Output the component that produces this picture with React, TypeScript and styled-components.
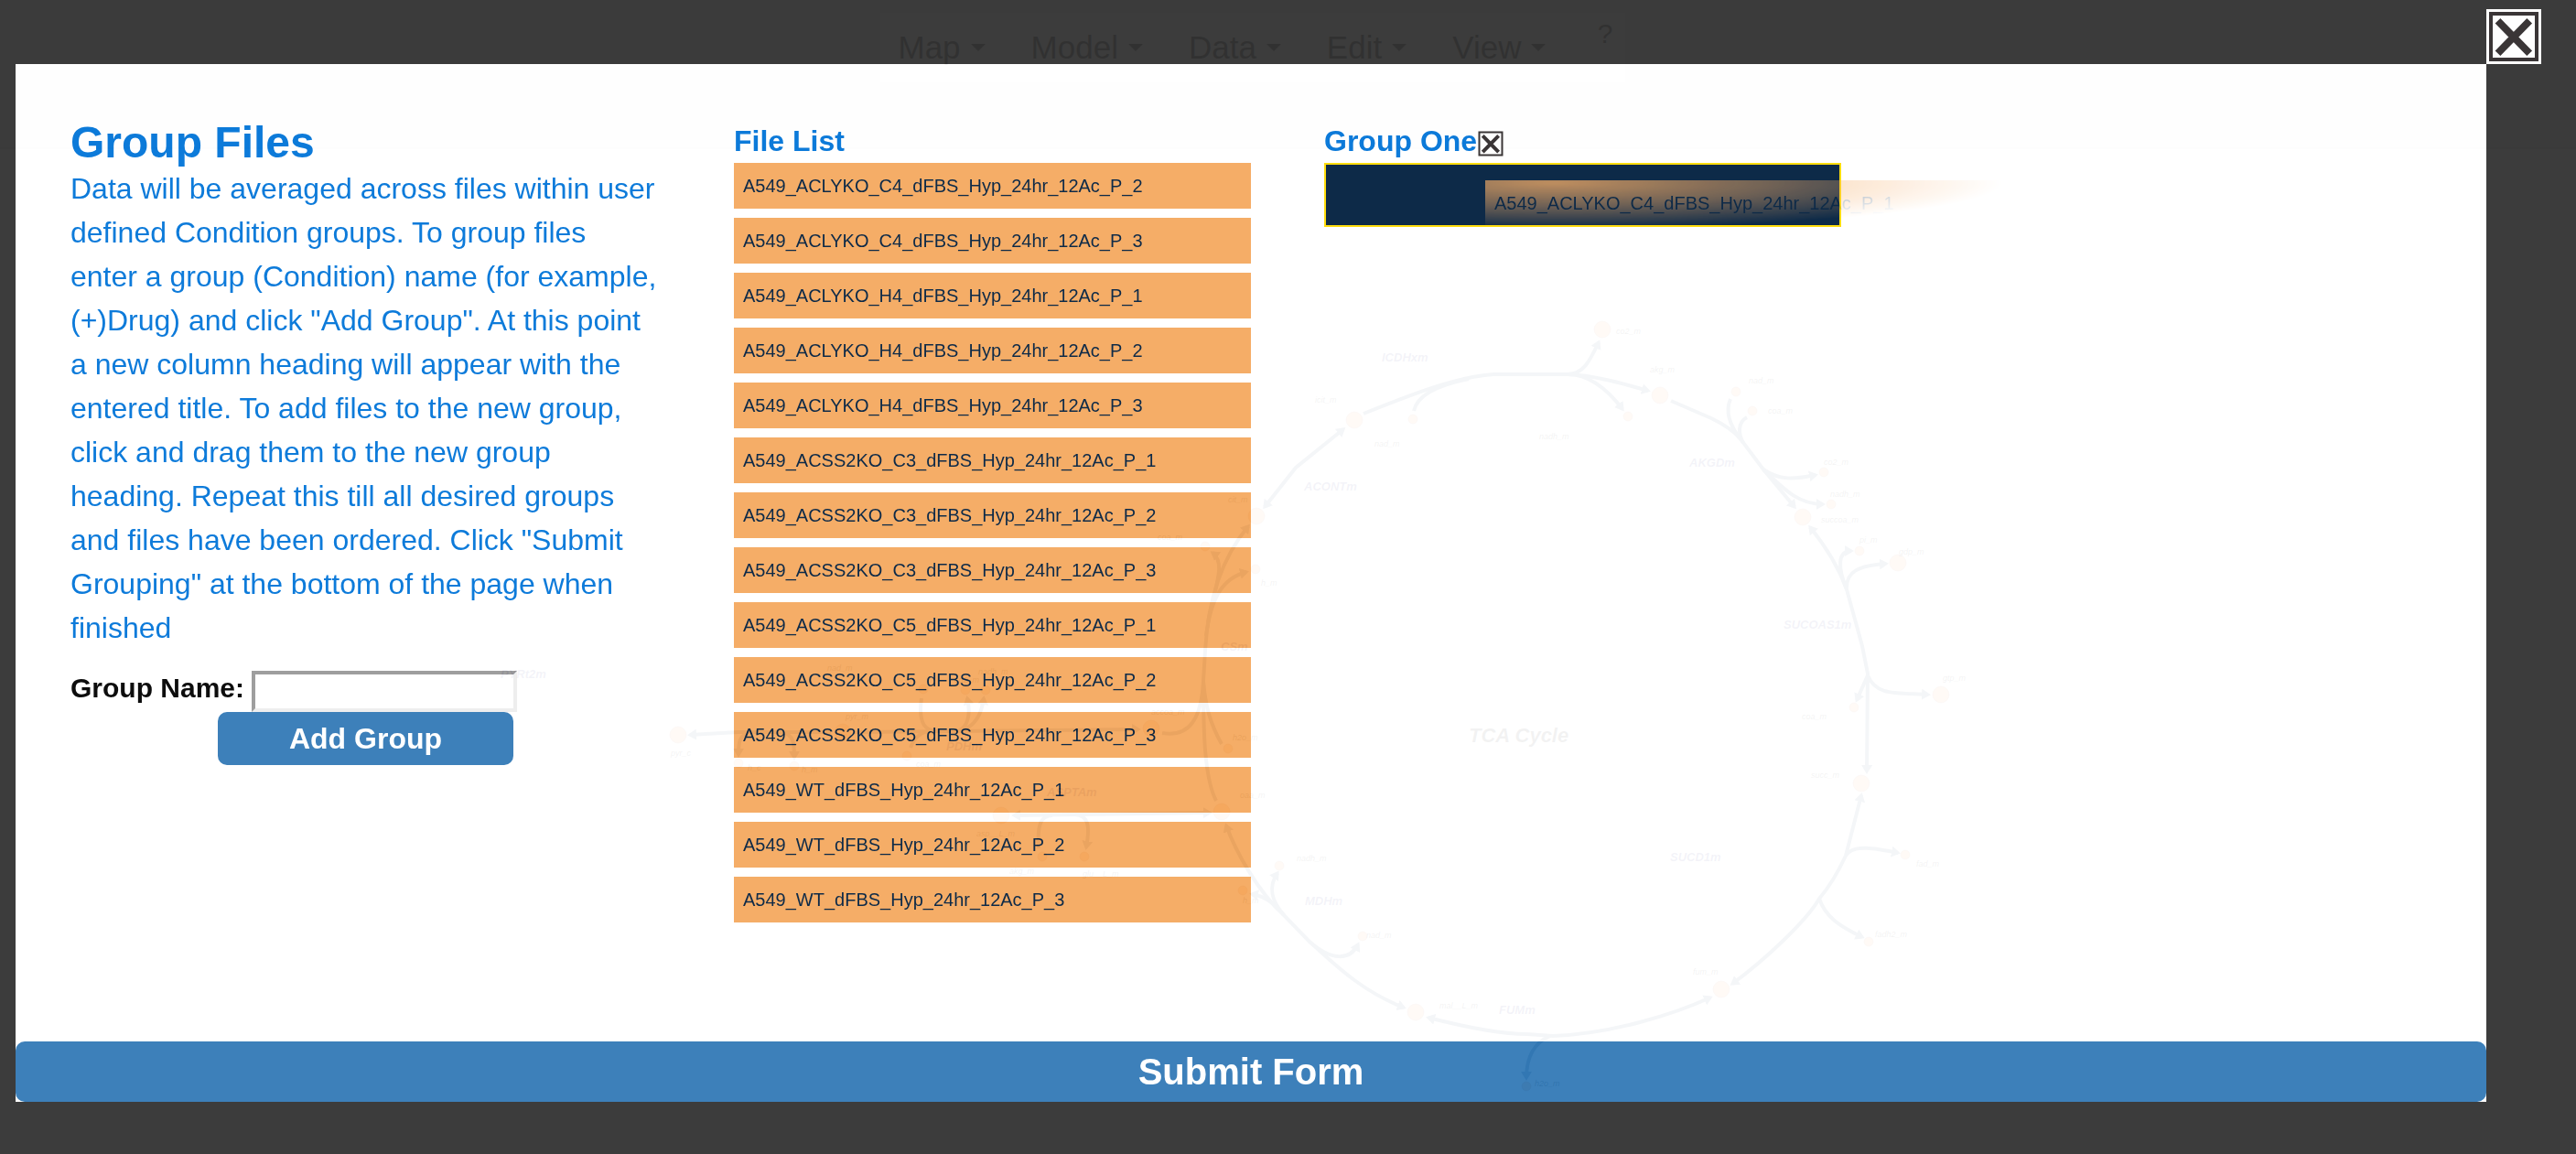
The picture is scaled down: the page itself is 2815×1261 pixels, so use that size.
import React, { useState } from "react";
import styled, { createGlobalStyle } from "styled-components";

const colors = {
  blue: "#0074d9",
  navy: "#001f3f",
  yellow: "#ffdc00",
  orange: "#f5a95f",
  button: "#337ab7",
  backdrop: "#323232",
  icon: "#312c2d",
  edge: "#334e75",
  node: "#f0935a",
  nodeStroke: "#a24510",
  reaction: "#202078",
};

const GlobalStyle = createGlobalStyle`
  *, *::before, *::after { box-sizing: border-box; }
  body {
    margin: 0;
    background: #fff;
    font-family: "Liberation Sans", Arial, sans-serif;
    font-size: 32px;
    line-height: 48px;
    overflow: hidden;
  }
  h1, h2, p, ul { margin: 0; padding: 0; }
  button, input { font-family: inherit; }
`;

/* ---------- page behind the dialog ---------- */

const Page = styled.div`
  position: relative;
  min-height: 100vh;
`;

const Header = styled.header`
  display: flex;
  justify-content: center;
  align-items: flex-start;
  height: 163px;
  padding: 13px 78px 0 0;
  background: #e7e7e7;
  border-bottom: 2px solid #cfcfcf;
`;

const Menu = styled.nav`
  display: flex;
  gap: 50px;
  width: 816px;
  height: 78px;
  padding: 0 13px 0 20px;
  background: #f8f8f8;
  border: 1px solid #dcdcdc;
`;

const MenuButton = styled.button`
  display: flex;
  align-items: center;
  gap: 11px;
  padding: 0;
  border: 0;
  background: none;
  color: #333;
  font-size: 35px;
  line-height: 40px;

  &::after {
    content: "";
    border: 8px solid transparent;
    border-top-color: currentColor;
    border-bottom: 0;
  }
`;

const HelpButton = styled.button`
  margin-left: auto;
  align-self: flex-start;
  padding: 0;
  border: 0;
  background: none;
  color: #333;
  font-size: 30px;
  line-height: 46px;
`;

const MapCanvas = styled.svg`
  position: absolute;
  left: 0;
  top: 0;
  width: 100%;
  height: 100%;
  overflow: hidden;
  font-style: italic;
  font-weight: bold;
`;

const edges: { d: string; start?: boolean; end?: boolean }[] = [
  { d: "M1490 452C1540 432 1590 412 1632 409H1713" },
  { d: "M1545 449C1549 430 1575 420 1605 414" },
  { d: "M1468 469L1416 511L1382 554", start: true, end: true },
  { d: "M1364 575C1335 610 1320 655 1317 711L1315 744C1315 800 1316 850 1329 875", start: true },
  { d: "M1325 604C1340 615 1328 640 1320 680", start: true },
  { d: "M1362 625C1335 632 1323 655 1318 695", start: true },
  { d: "M1270 801C1300 806 1313 785 1315 744" },
  { d: "M1335 813C1322 790 1317 770 1315 744" },
  { d: "M1340 902C1350 930 1375 975 1403 1000L1431 1029C1455 1050 1485 1082 1534 1101", start: true, end: true },
  { d: "M1396 954C1385 970 1390 985 1403 1000", start: true },
  { d: "M1368 977C1385 980 1395 990 1403 1000", start: true },
  { d: "M1484 1032C1475 1050 1455 1050 1431 1029", start: true },
  { d: "M1561 1112C1600 1122 1640 1130 1669 1130L1697 1132C1760 1130 1830 1108 1869 1090", start: true, end: true },
  { d: "M1694 1132C1675 1140 1668 1158 1668 1178", end: true },
  { d: "M1713 409C1730 409 1737 395 1747 374", end: true },
  { d: "M1713 409C1740 410 1770 418 1801 427", end: true },
  { d: "M1713 409C1740 409 1760 430 1773 447", end: true },
  { d: "M1826 438L1870 457Q1893 468 1903 481L1927 513L1961 554", end: true },
  { d: "M1891 436C1885 450 1890 465 1903 481" },
  { d: "M1909 456C1898 462 1900 475 1905 484" },
  { d: "M1927 513C1945 525 1960 524 1984 519", end: true },
  { d: "M1927 513C1950 535 1965 551 1992 551", end: true },
  { d: "M1978 576C1995 597 2010 622 2018 644L2035 706L2041 736L2040 843", start: true, end: true },
  { d: "M2023 602C2008 602 2008 620 2018 644", start: true },
  { d: "M2061 616C2030 618 2018 625 2018 642", start: true },
  { d: "M2041 738L2029 765", end: true },
  { d: "M2041 738C2050 760 2070 757 2107 759", end: true },
  { d: "M2034 869L2017 935C2010 950 2000 968 1988 982C1975 1005 1930 1048 1893 1075", start: true, end: true },
  { d: "M2017 935C2025 922 2050 927 2074 932", end: true },
  { d: "M1988 982C1995 1002 2010 1012 2035 1024", end: true },
  { d: "M754 803L807 800H908", start: true },
  { d: "M934 800L1244 797", end: true },
  { d: "M822 800C807 802 807 812 807 825", end: true },
  { d: "M854 800C868 802 868 814 868 828", end: true },
  { d: "M1007 763C1004 785 1008 797 1020 798" },
  { d: "M1075 763C1072 785 1062 795 1050 798", start: true },
  { d: "M1057 763C1062 785 1055 795 1048 798", start: true },
  { d: "M995 817C1000 803 1010 798 1022 798" },
  { d: "M1108 891L1322 888", start: true, end: true },
  { d: "M1135 927C1133 900 1138 891 1150 891" },
  { d: "M1187 926C1192 900 1188 891 1175 890", start: true },
];

/* node x, node y, radius, label, label x, label y */
const nodes: [number, number, number, string, number, number][] = [
  [1480, 459, 9, "icit_m", 1437, 440],
  [1544, 458, 5, "nad_m", 1502, 488],
  [1373, 564, 9, "cit_m", 1342, 549],
  [1317, 597, 5, "coa_m", 1265, 590],
  [1372, 622, 5, "h_m", 1378, 640],
  [1258, 796, 9, "accoa_m", 1258, 781],
  [1342, 818, 5, "h2o_m", 1347, 809],
  [1335, 887, 9, "oaa_m", 1355, 872],
  [1398, 946, 5, "nadh_m", 1417, 941],
  [1358, 973, 5, "h_m", 1358, 987],
  [1489, 1023, 5, "nad_m", 1493, 1025],
  [1547, 1106, 9, "mal__L_m", 1573, 1102],
  [1668, 1187, 5, "h2o_m", 1677, 1187],
  [1751, 360, 9, "co2_m", 1766, 365],
  [1814, 432, 9, "akg_m", 1803, 407],
  [1779, 455, 5, "nadh_m", 1682, 480],
  [1897, 428, 5, "nad_m", 1911, 419],
  [1915, 449, 5, "coa_m", 1932, 452],
  [1993, 516, 5, "co2_m", 1993, 508],
  [2001, 551, 5, "nadh_m", 2000, 543],
  [1970, 565, 9, "succoa_m", 1990, 571],
  [2032, 602, 5, "pi_m", 2032, 593],
  [2074, 615, 9, "gdp_m", 2075, 606],
  [2121, 759, 9, "gtp_m", 2123, 744],
  [2026, 773, 5, "coa_m", 1969, 786],
  [2034, 856, 9, "succ_m", 1979, 850],
  [2082, 934, 5, "fad_m", 2094, 947],
  [2042, 1029, 5, "fadh2_m", 2049, 1024],
  [1881, 1081, 9, "fum_m", 1850, 1065],
  [741, 803, 9, "pyr_c", 733, 826],
  [921, 800, 9, "pyr_m", 924, 786],
  [1009, 753, 5, "nad_m", 904, 733],
  [1077, 754, 5, "nadh_m", 1069, 737],
  [1055, 754, 5, "co2_m", 1043, 746],
  [991, 826, 5, "coa_m", 1001, 838],
  [807, 834, 5, "h_c", 817, 842],
  [868, 837, 5, "h_m", 876, 844],
  [1094, 891, 9, "asp__L_m", 1067, 914],
  [1139, 936, 5, "akg_m", 1103, 955],
  [1185, 936, 5, "glu__L_m", 1183, 958],
];

const reactions: [string, number, number][] = [
  ["ICDHxm", 1510, 395],
  ["ACONTm", 1425, 536],
  ["CSm", 1334, 711],
  ["MDHm", 1426, 989],
  ["FUMm", 1638, 1108],
  ["AKGDm", 1846, 510],
  ["SUCOAS1m", 1949, 687],
  ["SUCD1m", 1825, 941],
  ["PDHm", 1034, 820],
  ["ASPTAm", 1144, 870],
  ["PYRt2m", 547, 741],
];

function MetabolicMap() {
  return (
    <MapCanvas viewBox="0 0 2815 1261" aria-hidden="true">
      <defs>
        <marker
          id="arrow"
          viewBox="0 0 10 12"
          refX="7"
          refY="6"
          markerWidth="10"
          markerHeight="12"
          markerUnits="userSpaceOnUse"
          orient="auto-start-reverse"
        >
          <path d="M0 0L10 6L0 12z" fill={colors.edge} />
        </marker>
      </defs>
      <g fill="none" stroke={colors.edge} strokeWidth="4">
        {edges.map((e) => (
          <path
            key={e.d}
            d={e.d}
            markerStart={e.start ? "url(#arrow)" : undefined}
            markerEnd={e.end ? "url(#arrow)" : undefined}
          />
        ))}
      </g>
      <g fill={colors.node} stroke={colors.nodeStroke} strokeWidth="0.5">
        {nodes.map(([x, y, r]) => (
          <circle key={`${x}-${y}`} cx={x} cy={y} r={r} />
        ))}
      </g>
      <g fill="#111" fontSize="9">
        {nodes.map(([x, y, , label, lx, ly]) => (
          <text key={`${x}-${y}`} x={lx} y={ly} fontWeight="normal">
            {label}
          </text>
        ))}
      </g>
      <g fill={colors.reaction} fontSize="13">
        {reactions.map(([label, x, y]) => (
          <text key={label} x={x} y={y}>
            {label}
          </text>
        ))}
      </g>
      <text x="1605" y="811" fontSize="22" fill="#111">
        TCA Cycle
      </text>
    </MapCanvas>
  );
}

/* ---------- dialog ---------- */

const Overlay = styled.div`
  position: fixed;
  inset: 0;
  display: grid;
  grid-template-columns: 1fr 60px;
  grid-template-rows: 60px 1fr;
  padding: 10px 38px 57px 17px;
  background: ${colors.backdrop};
  opacity: 0.95;
`;

const CloseButton = styled.button`
  grid-column: 2;
  width: 60px;
  height: 60px;
  padding: 0;
  border: 0;
  background: #fff;
`;

const Dialog = styled.form`
  grid-row: 2;
  display: flex;
  flex-direction: column;
  background: #fff;
`;

const Columns = styled.div`
  flex: 1;
  display: grid;
  grid-template-columns: repeat(4, 1fr);
  padding: 60px 60px 0;
`;

const Column = styled.section<{ $inset?: boolean }>`
  padding-left: ${(p) => (p.$inset ? "80px" : "0")};
`;

const Title = styled.h1`
  color: ${colors.blue};
  font-size: 48px;
  line-height: 52px;
`;

const Help = styled.p`
  color: ${colors.blue};
`;

const ColumnHeader = styled.div`
  display: flex;
  align-items: center;
  height: 48px;
`;

const ColumnTitle = styled.h2`
  color: ${colors.blue};
  font-size: 32px;
  line-height: 48px;
`;

const RemoveButton = styled.button`
  width: 30px;
  height: 30px;
  margin-top: 6px;
  padding: 0;
  border: 0;
  background: #fff;
`;

const Field = styled.div`
  display: flex;
  align-items: flex-start;
  gap: 8px;
  margin-top: 23px;
`;

const FieldLabel = styled.label`
  font-size: 30px;
  font-weight: bold;
  line-height: 38px;
  white-space: nowrap;
`;

const TextInput = styled.input`
  width: 45%;
  height: 45px;
  padding: 0 4px;
  border: 4px solid;
  border-color: #999 #eee #eee #999;
  background: transparent;
  font-size: 30px;
`;

const PrimaryButton = styled.button`
  border: 0;
  border-radius: 10px;
  background: ${colors.button};
  color: #fff;
  font-weight: bold;
`;

const AddButton = styled(PrimaryButton)`
  display: block;
  width: 50%;
  height: 58px;
  margin-left: 25%;
  font-size: 32px;
`;

const SubmitButton = styled(PrimaryButton)`
  height: 66px;
  font-size: 40px;
`;

const FileItems = styled.ul`
  display: grid;
  gap: 10px;
  list-style: none;
`;

const FileItem = styled.li`
  padding: 10px;
  background: ${colors.orange};
  color: ${colors.navy};
  font-size: 20px;
  line-height: 30px;
  white-space: nowrap;
`;

const DropZone = styled.div`
  position: relative;
  height: 70px;
  border: 2px solid ${colors.yellow};
  background: ${colors.navy};
`;

const DraggedFile = styled.div`
  position: absolute;
  left: 174px;
  top: 17px;
  width: calc(100% + 4px);
  padding: 10px;
  background: ${colors.orange};
  color: ${colors.navy};
  font-size: 20px;
  line-height: 30px;
  white-space: nowrap;
  mask-image: radial-gradient(
    ellipse 490px 50px at 75px 3px,
    rgba(0, 0, 0, 0.76),
    rgba(0, 0, 0, 0.42) 50%,
    rgba(0, 0, 0, 0.26) 70%,
    transparent
  );
`;

function CrossIcon({ size }: { size: number }) {
  return (
    <svg width={size} height={size} viewBox="0 0 60 60" display="block" aria-hidden="true">
      <rect x="5" y="5" width="50" height="50" fill="none" stroke={colors.icon} strokeWidth="4" />
      <path d="M12.5 12.8L47.2 48.2M47.2 12.8L12.5 48.2" stroke={colors.icon} strokeWidth="8" />
    </svg>
  );
}

const files = [
  "A549_ACLYKO_C4_dFBS_Hyp_24hr_12Ac_P_2",
  "A549_ACLYKO_C4_dFBS_Hyp_24hr_12Ac_P_3",
  "A549_ACLYKO_H4_dFBS_Hyp_24hr_12Ac_P_1",
  "A549_ACLYKO_H4_dFBS_Hyp_24hr_12Ac_P_2",
  "A549_ACLYKO_H4_dFBS_Hyp_24hr_12Ac_P_3",
  "A549_ACSS2KO_C3_dFBS_Hyp_24hr_12Ac_P_1",
  "A549_ACSS2KO_C3_dFBS_Hyp_24hr_12Ac_P_2",
  "A549_ACSS2KO_C3_dFBS_Hyp_24hr_12Ac_P_3",
  "A549_ACSS2KO_C5_dFBS_Hyp_24hr_12Ac_P_1",
  "A549_ACSS2KO_C5_dFBS_Hyp_24hr_12Ac_P_2",
  "A549_ACSS2KO_C5_dFBS_Hyp_24hr_12Ac_P_3",
  "A549_WT_dFBS_Hyp_24hr_12Ac_P_1",
  "A549_WT_dFBS_Hyp_24hr_12Ac_P_2",
  "A549_WT_dFBS_Hyp_24hr_12Ac_P_3",
];

export default function App() {
  const [groupName, setGroupName] = useState("");

  return (
    <>
      <GlobalStyle />
      <Page>
        <Header>
          <Menu>
            {["Map", "Model", "Data", "Edit", "View"].map((name) => (
              <MenuButton key={name} type="button">
                {name}
              </MenuButton>
            ))}
            <HelpButton type="button">?</HelpButton>
          </Menu>
        </Header>
        <MetabolicMap />
      </Page>

      <Overlay>
        <CloseButton type="button" aria-label="Close">
          <CrossIcon size={60} />
        </CloseButton>
        <Dialog onSubmit={(e) => e.preventDefault()}>
          <Columns>
            <Column>
              <Title>Group Files</Title>
              <Help>
                Data will be averaged across files within user defined Condition groups. To group
                files enter a group (Condition) name (for example, (+)Drug) and click "Add Group".
                At this point a new column heading will appear with the entered title. To add files
                to the new group, click and drag them to the new group heading. Repeat this till all
                desired groups and files have been ordered. Click "Submit Grouping" at the bottom of
                the page when finished
              </Help>
              <Field>
                <FieldLabel htmlFor="group-name">Group Name:</FieldLabel>
                <TextInput
                  id="group-name"
                  type="text"
                  value={groupName}
                  onChange={(e) => setGroupName(e.target.value)}
                />
              </Field>
              <AddButton type="button">Add Group</AddButton>
            </Column>

            <Column $inset>
              <ColumnHeader>
                <ColumnTitle>File List</ColumnTitle>
              </ColumnHeader>
              <FileItems>
                {files.map((file) => (
                  <FileItem key={file} draggable>
                    {file}
                  </FileItem>
                ))}
              </FileItems>
            </Column>

            <Column $inset>
              <ColumnHeader>
                <ColumnTitle>Group One</ColumnTitle>
                <RemoveButton type="button" aria-label="Remove Group One">
                  <CrossIcon size={30} />
                </RemoveButton>
              </ColumnHeader>
              <DropZone>
                <DraggedFile>A549_ACLYKO_C4_dFBS_Hyp_24hr_12Ac_P_1</DraggedFile>
              </DropZone>
            </Column>
          </Columns>
          <SubmitButton type="submit">Submit Form</SubmitButton>
        </Dialog>
      </Overlay>
    </>
  );
}
